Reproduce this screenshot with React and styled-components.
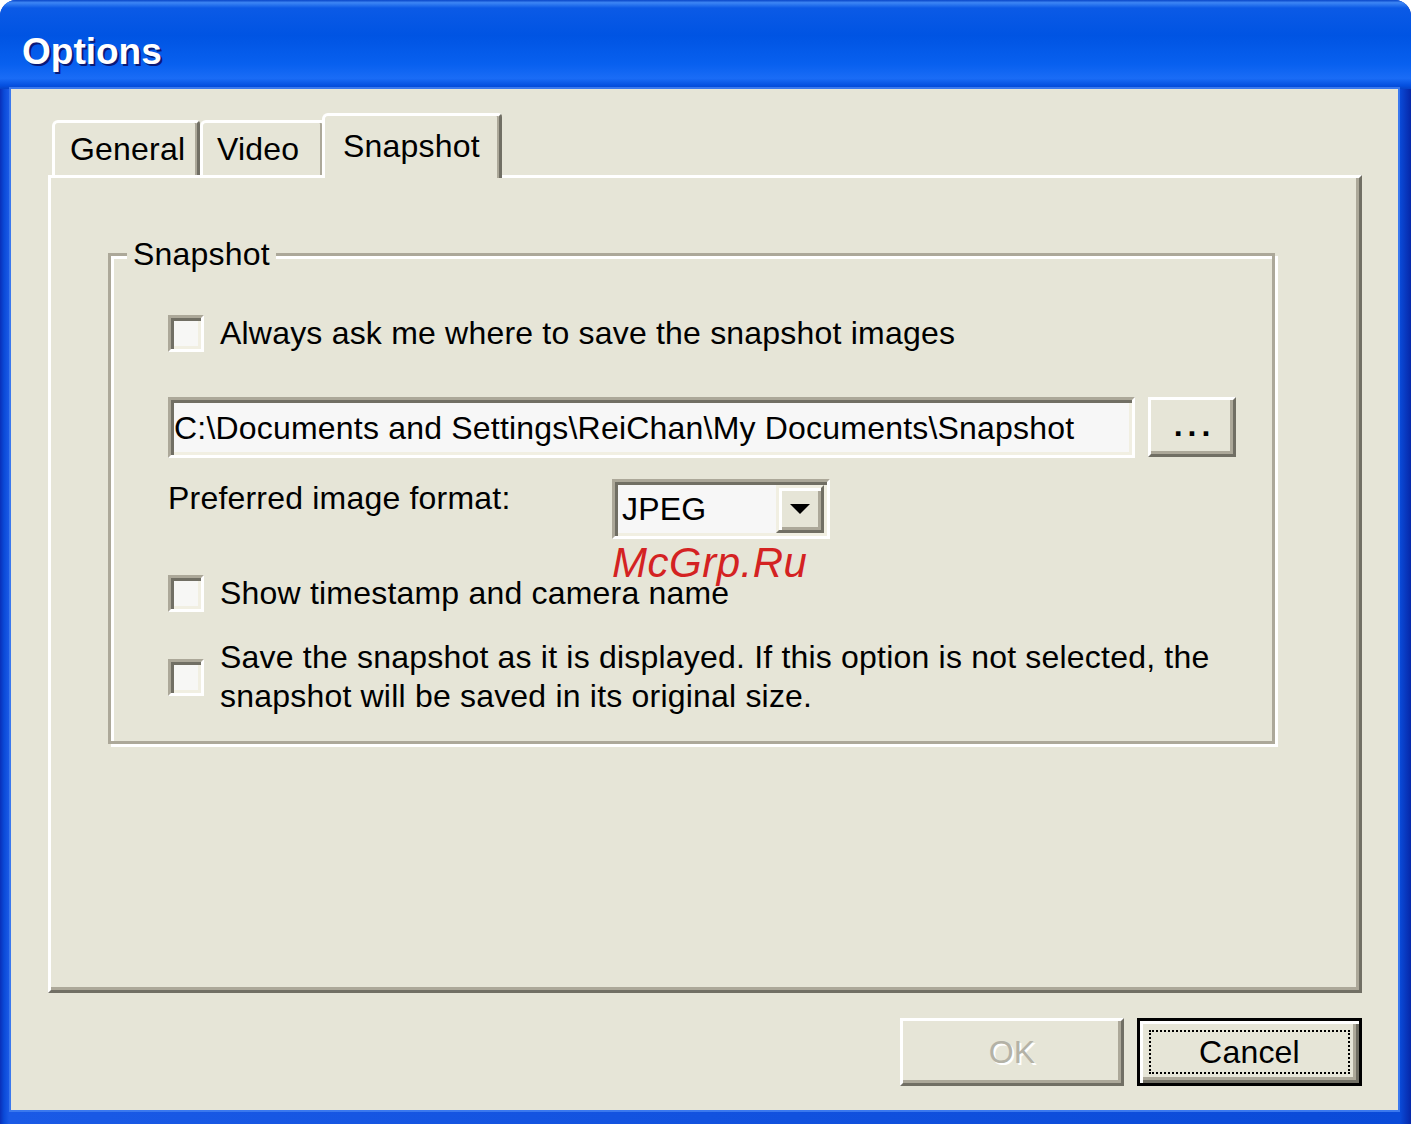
import React from "react";
import styled, { createGlobalStyle, css } from "styled-components";

const GlobalStyle = createGlobalStyle`
  html, body {
    margin: 0;
    padding: 0;
    background: #ffffff;
  }
  body {
    font-family: "Liberation Sans", Arial, sans-serif;
    font-size: 32px;
    letter-spacing: 0.2px;
    color: #000;
  }
`;

const FACE = "#e6e5d7";
const LIGHT = "#f1efe2";
const SHADOW = "#aca899";
const DARK = "#716f64";

const raised = css`
  border: 3px solid;
  border-color: #ffffff ${DARK} ${DARK} #ffffff;
  box-shadow: inset -3px -3px 0 ${SHADOW};
`;

const sunken = css`
  border: 3px solid;
  border-color: ${SHADOW} #ffffff #ffffff ${SHADOW};
  box-shadow: inset 3px 3px 0 ${DARK}, inset -3px -3px 0 ${LIGHT};
`;

const Window = styled.div`
  position: relative;
  width: 1411px;
  height: 1124px;
  display: flex;
  flex-direction: column;
  border-radius: 16px 16px 0 0;
  overflow: hidden;
  background: linear-gradient(
    to right,
    #0a2fb8 0px,
    #0a4ad8 4px,
    #1a5ae6 9px,
    #0a4ad8 1400px,
    #0627a8 1411px
  );
  box-sizing: border-box;
`;

const TitleBar = styled.div`
  height: 89px;
  flex-shrink: 0;
  box-sizing: border-box;
  padding: 33px 0 0 22px;
  background: linear-gradient(
    to bottom,
    #0845c8 0%,
    #3d86f4 3%,
    #0b5ae6 9%,
    #0054e3 40%,
    #0860ef 72%,
    #1a6cf6 88%,
    #0550e0 96%,
    #0643c8 100%
  );
`;

const Title = styled.span`
  font-family: "Liberation Sans", Arial, sans-serif;
  font-weight: bold;
  font-size: 37px;
  line-height: 37px;
  letter-spacing: 0;
  color: #ffffff;
  text-shadow: 2px 2px 0 #0a1a78;
`;

const Body = styled.div`
  flex: 1;
  margin: 0 13px 14px 11px;
  background: ${FACE};
  box-shadow: 0 0 0 2px #3a78ee;
  display: flex;
  flex-direction: column;
  padding: 24px 36px 24px 37px;
`;

const TabStrip = styled.div`
  height: 62px;
  display: flex;
  align-items: flex-end;
  padding-left: 4px;
`;

const Tab = styled.div`
  box-sizing: border-box;
  width: ${(p) => p.$w}px;
  height: ${(p) => (p.$active ? 65 : 55)}px;
  margin-bottom: ${(p) => (p.$active ? -3 : 0)}px;
  margin-left: ${(p) => (p.$active ? -3 : 0)}px;
  padding-left: ${(p) => p.$pad}px;
  padding-bottom: ${(p) => (p.$active ? 3 : 0)}px;
  position: relative;
  z-index: ${(p) => (p.$active ? 2 : 1)};
  display: flex;
  align-items: center;
  background: ${FACE};
  border-top: 3px solid #ffffff;
  border-left: 3px solid #ffffff;
  border-right: 3px solid ${DARK};
  border-radius: 6px 4px 0 0;
  box-shadow: inset -2px 0 0 ${SHADOW};
  line-height: 36px;
  white-space: nowrap;
`;

const Panel = styled.div`
  box-sizing: border-box;
  width: 1314px;
  height: 818px;
  border: 3px solid;
  border-color: #ffffff ${DARK} ${DARK} #ffffff;
  box-shadow: inset -3px -3px 0 ${SHADOW};
  padding: 75px 0 0 57px;
`;

const GroupBox = styled.div`
  position: relative;
  box-sizing: border-box;
  width: 1167px;
  height: 491px;
  border: 3px solid ${SHADOW};
  box-shadow: inset 3px 3px 0 #ffffff, 3px 3px 0 #ffffff;
  padding: 58px 36px 0 57px;
  display: flex;
  flex-direction: column;
`;

const Legend = styled.span`
  position: absolute;
  left: 16px;
  top: -20px;
  padding: 0 6px;
  background: ${FACE};
  line-height: 36px;
`;

const CheckRow = styled.label`
  display: flex;
  align-items: center;
  gap: 16px;
  margin-top: ${(p) => p.$top || 0}px;
  min-height: ${(p) => p.$h || 38}px;
  line-height: 39px;
  white-space: nowrap;
`;

const CheckBox = styled.span`
  flex-shrink: 0;
  box-sizing: border-box;
  width: 36px;
  height: 37px;
  background: #f7f7f5;
  ${sunken}
`;

const PathRow = styled.div`
  display: flex;
  gap: 13px;
  margin-top: 44px;
  height: 61px;
`;

const TextField = styled.div`
  flex: 1;
  box-sizing: border-box;
  background: #f7f7f7;
  ${sunken}
  display: flex;
  align-items: center;
  padding-left: 3px;
  line-height: 36px;
  white-space: nowrap;
  overflow: hidden;
`;

const Button = styled.div`
  box-sizing: border-box;
  width: ${(p) => p.$w}px;
  height: ${(p) => p.$h}px;
  background: ${FACE};
  display: flex;
  align-items: center;
  justify-content: center;
  line-height: 36px;
  ${(p) =>
    p.$default
      ? css`
          border: 3px solid #000;
          box-shadow: inset 3px 3px 0 #ffffff, inset -3px -3px 0 ${DARK},
            inset -6px -6px 0 ${SHADOW};
          padding: 9px;
        `
      : raised}
  color: ${(p) => (p.$disabled ? "#b4b2a6" : "#000")};
  text-shadow: ${(p) => (p.$disabled ? "2px 2px 0 #ffffff" : "none")};
`;

const Dots = styled.span`
  letter-spacing: 5px;
  margin-right: -5px;
  font-weight: bold;
  padding-bottom: 4px;
`;

const FocusRing = styled.span`
  flex: 1;
  align-self: stretch;
  display: flex;
  align-items: center;
  justify-content: center;
  border: 2px dotted #000;
`;

const FormatRow = styled.div`
  display: grid;
  grid-template-columns: 444px 218px;
  margin-top: 21px;
  height: 60px;
`;

const FieldLabel = styled.span`
  line-height: 36px;
  padding-top: 1px;
  white-space: nowrap;
`;

const Combo = styled.div`
  box-sizing: border-box;
  height: 60px;
  background: #f7f7f7;
  ${sunken}
  display: flex;
  align-items: stretch;
  padding: 3px 3px 3px 0;
`;

const ComboText = styled.span`
  flex: 1;
  display: flex;
  align-items: center;
  padding-left: 7px;
  line-height: 36px;
`;

const DropButton = styled.span`
  box-sizing: border-box;
  width: 48px;
  background: ${FACE};
  border: 3px solid;
  border-color: ${LIGHT} ${DARK} ${DARK} ${LIGHT};
  box-shadow: inset 3px 3px 0 #ffffff, inset -3px -3px 0 ${SHADOW};
  display: flex;
  align-items: center;
  justify-content: center;
`;

const ButtonRow = styled.div`
  display: flex;
  justify-content: flex-end;
  gap: 13px;
  margin-top: 25px;
`;

const Watermark = styled.span`
  position: absolute;
  left: 612px;
  top: 542px;
  font-family: "Liberation Sans", Arial, sans-serif;
  font-style: italic;
  font-size: 42px;
  line-height: 42px;
  color: #d42222;
  letter-spacing: 0.5px;
  pointer-events: none;
`;

export default function App() {
  return (
    <>
      <GlobalStyle />
      <Window>
        <TitleBar>
          <Title>Options</Title>
        </TitleBar>
        <Body>
          <TabStrip>
            <Tab $w={148} $pad={15}>General</Tab>
            <Tab $w={125} $pad={14}>Video</Tab>
            <Tab $w={180} $pad={18} $active>
              Snapshot
            </Tab>
          </TabStrip>
          <Panel>
            <GroupBox>
              <Legend>Snapshot</Legend>
              <CheckRow>
                <CheckBox />
                Always ask me where to save the snapshot images
              </CheckRow>
              <PathRow>
                <TextField>
                  C:\Documents and Settings\ReiChan\My Documents\Snapshot
                </TextField>
                <Button $w={88} $h={60}>
                  <Dots>...</Dots>
                </Button>
              </PathRow>
              <FormatRow>
                <FieldLabel>Preferred image format:</FieldLabel>
                <Combo>
                  <ComboText>JPEG</ComboText>
                  <DropButton>
                    <svg width="20" height="10" viewBox="0 0 20 10">
                      <path d="M0 0 H20 L10 10 Z" fill="#000" />
                    </svg>
                  </DropButton>
                </Combo>
              </FormatRow>
              <CheckRow $top={35} $h={37}>
                <CheckBox />
                Show timestamp and camera name
              </CheckRow>
              <CheckRow $top={25} $h={77}>
                <CheckBox />
                <span>
                  Save the snapshot as it is displayed. If this option is not
                  selected, the
                  <br />
                  snapshot will be saved in its original size.
                </span>
              </CheckRow>
            </GroupBox>
          </Panel>
          <ButtonRow>
            <Button $w={224} $h={68} $disabled>
              OK
            </Button>
            <Button $w={225} $h={68} $default>
              <FocusRing>Cancel</FocusRing>
            </Button>
          </ButtonRow>
        </Body>
        <Watermark>McGrp.Ru</Watermark>
      </Window>
    </>
  );
}
